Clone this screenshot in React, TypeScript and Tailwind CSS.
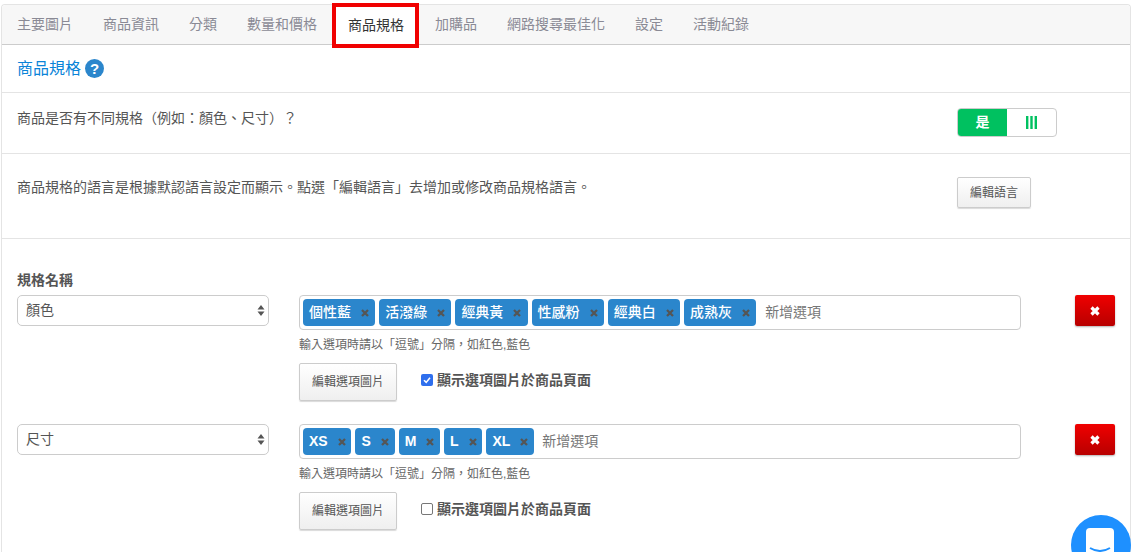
import React from "react";

const FONT = "[font-family:'Helvetica_Neue','Liberation_Sans','Noto_Sans_CJK_TC',sans-serif]";

const tabs = ["主要圖片", "商品資訊", "分類", "數量和價格", "商品規格", "加購品", "網路搜尋最佳化", "設定", "活動紀錄"];

function Tag({ label, latin }: { label: string; latin: boolean }) {
  return (
    <span className={`flex h-[27px] items-center rounded-[4px] bg-[#2b86cc] pl-[6px] text-[14px] text-white ${latin ? "pr-[5.8px] font-bold" : "pr-[6.2px] font-medium"}`}>
      <span>{label}</span>
      <svg className="ml-[10px]" width="8" height="8" viewBox="0 0 8 8">
        <path d="M1 1 L7 7 M7 1 L1 7" stroke="#555" strokeWidth="2.3" />
      </svg>
    </span>
  );
}

function Spec({ name, tags, checked, latin }: { name: string; tags: string[]; checked: boolean; latin: boolean }) {
  return (
    <div className="flex items-start">
      <div className="flex h-[31px] w-[252px] items-center justify-between rounded-[5px] border border-[#ccc] bg-white pl-[8px] pr-[3px] text-[14px] text-[#555]">
        <span>{name}</span>
        <svg width="8" height="13" viewBox="0 0 8 13">
          <path d="M4 1 L7.5 5.5 H0.5 Z M0.5 7.5 H7.5 L4 12 Z" fill="#555" />
        </svg>
      </div>
      <div className="ml-[30px] w-[722px]">
        <div className="flex h-[35px] items-center gap-[4px] rounded-[4px] border border-[#ccc] bg-white pl-[3px]">
          {tags.map((t) => (
            <Tag key={t} label={t} latin={latin} />
          ))}
          <span className={`text-[14px] text-[#777] ${latin ? "ml-[4px]" : "ml-[5px]"}`}>新增選項</span>
        </div>
        <p className="mt-[7px] text-[12px] leading-[17px] text-[#666]">輸入選項時請以「逗號」分隔，如紅色,藍色</p>
        <div className="mt-[9px] flex items-start">
          <button className="h-[38px] w-[98px] rounded-[2px] border border-[#ccc] bg-gradient-to-b from-white to-[#efefef] text-[12px] text-[#555] shadow-[0_1px_1px_rgba(0,0,0,0.15)]">
            編輯選項圖片
          </button>
          <label className="ml-[24px] mt-[8px] flex items-center text-[14px] leading-[18px] font-bold text-[#555]">
            {checked ? (
              <span className="mr-[4px] flex h-[12px] w-[12px] items-center justify-center rounded-[2px] bg-[#2f6fed]">
                <svg width="10" height="10" viewBox="0 0 10 10">
                  <path d="M2 5.2 L4.2 7.4 L8 2.8" stroke="#fff" strokeWidth="1.6" fill="none" />
                </svg>
              </span>
            ) : (
              <span className="mr-[4px] h-[12px] w-[12px] rounded-[2px] border border-[#777] bg-white" />
            )}
            顯示選項圖片於商品頁面
          </label>
        </div>
      </div>
      <button className="ml-[54px] flex h-[31px] w-[40px] items-center justify-center rounded-[2px] bg-gradient-to-b from-[#f00000] to-[#b80000] shadow-[0_1px_2px_rgba(0,0,0,0.3)]">
        <svg width="10" height="10" viewBox="0 0 10 10">
          <path d="M1.5 1.5 L8.5 8.5 M8.5 1.5 L1.5 8.5" stroke="#fff" strokeWidth="3.2" />
        </svg>
      </button>
    </div>
  );
}

export default function App() {
  return (
    <div className={`relative h-[552px] w-[1132px] overflow-hidden bg-white ${FONT}`}>
      <div className="ml-px mt-[4px] w-[1130px] rounded-t-[4px] border border-b-0 border-[#e4e4e4] pb-[40px]">
        <nav className="flex h-[40px] items-center rounded-t-[4px] border-b border-[#ccc] bg-[#f7f7f7]">
          {tabs.map((t) => {
            const active = t === "商品規格";
            return active ? (
              <span key={t} className="z-10 mr-px mt-[-2px] flex h-[45px] items-center self-start border-[4px] border-[#f00000] bg-white pb-[1px] pl-[12px] pr-[11px] text-[14px] text-[#333]">
                {t}
              </span>
            ) : (
              <span key={t} className="px-[15px] text-[14px] text-[#8a8a95]">
                {t}
              </span>
            );
          })}
        </nav>
        <div className="flex h-[48px] items-center gap-[4px] border-b border-[#e4e4e4] pl-[15px]">
          <h2 className="text-[16px] text-[#0a84d8]">商品規格</h2>
          <svg width="19" height="19" viewBox="0 0 19 19">
            <circle cx="9.5" cy="9.5" r="9.5" fill="#2b86cc" />
            <text x="9.5" y="15" textAnchor="middle" fontSize="15" fontWeight="700" fill="#fff" fontFamily="Liberation Sans">?</text>
          </svg>
        </div>
        <div className="flex h-[61px] items-start justify-between border-b border-[#e4e4e4] pl-[15px] pr-[73px] pt-[15px]">
          <p className="text-[14px] leading-[20px] text-[#555]">商品是否有不同規格（例如：顏色、尺寸）？</p>
          <div className="flex h-[29px] w-[100px] overflow-hidden rounded-[4px] border border-[#ccc]">
            <span className="flex w-[49px] items-center justify-center bg-[#00c160] text-[14px] font-bold text-white">是</span>
            <span className="flex flex-1 items-center justify-center">
              <svg width="11" height="13" viewBox="0 0 11 13">
                <path d="M1.2 0 V13 M5.5 0 V13 M9.8 0 V13" stroke="#00c160" strokeWidth="2.4" />
              </svg>
            </span>
          </div>
        </div>
        <div className="flex h-[85px] items-start justify-between border-b border-[#e4e4e4] pl-[15px] pr-[99px] pt-[23px]">
          <p className="text-[14px] leading-[20px] text-[#555]">商品規格的語言是根據默認語言設定而顯示。點選「編輯語言」去增加或修改商品規格語言。</p>
          <button className="h-[31px] w-[74px] rounded-[2px] border border-[#ccc] bg-gradient-to-b from-white to-[#efefef] text-[12px] text-[#555] shadow-[0_1px_1px_rgba(0,0,0,0.15)]">
            編輯語言
          </button>
        </div>
        <div className="px-[15px] pt-[31px]">
          <div className="mb-[5px] text-[14px] leading-[20px] font-bold text-[#555]">規格名稱</div>
          <div className="flex flex-col gap-[23px]">
            <Spec name="顏色" tags={["個性藍", "活潑綠", "經典黃", "性感粉", "經典白", "成熟灰"]} checked latin={false} />
            <Spec name="尺寸" tags={["XS", "S", "M", "L", "XL"]} checked={false} latin />
          </div>
        </div>
      </div>
      <div className="absolute left-[1071px] top-[515px] h-[60px] w-[60px] rounded-full bg-[#1e90ff]">
        <div className="absolute left-[15px] top-[13px] h-[40px] w-[28px] rounded-[4px] bg-white">
          <svg className="absolute left-[3px] top-[19px]" width="22" height="8" viewBox="0 0 22 8">
            <path d="M1 1 Q11 7 21 1" stroke="#1e90ff" strokeWidth="2" fill="none" />
          </svg>
        </div>
      </div>
    </div>
  );
}
